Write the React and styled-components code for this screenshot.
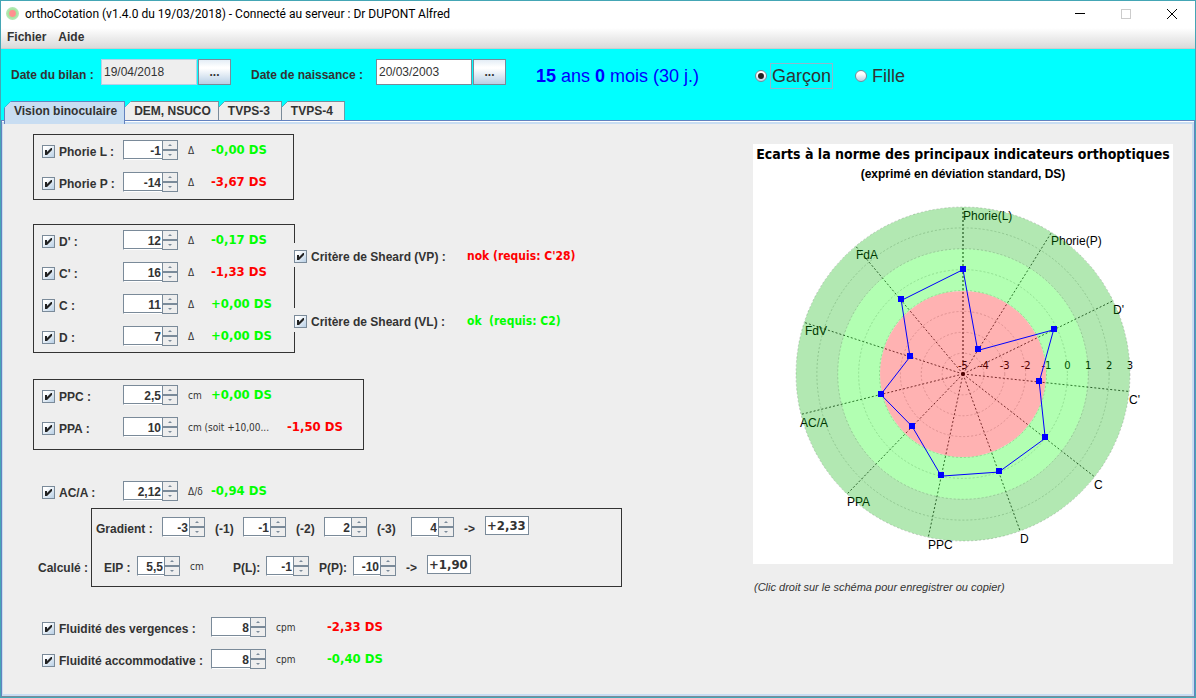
import React from "react";
import styled, { createGlobalStyle, css } from "styled-components";

const c = {
  text: "#333333",
  panel: "#eeeeee",
  steel: "#7a8a99",
  tabBlue: "#6382bf",
  paleBlue: "#c8ddf2",
  cyan: "#00ffff",
  ok: "#00ff00",
  bad: "#ff0000",
};
const arial = `"Liberation Sans", Arial, sans-serif`;
const tahoma = `"DejaVu Sans Condensed", "DejaVu Sans", Tahoma, sans-serif`;

const GlobalStyle = createGlobalStyle`
  *, *::before, *::after { box-sizing: border-box; }
  body { margin: 0; background: ${c.panel}; }
  button, input { font: inherit; color: inherit; margin: 0; padding: 0; }
`;

const Window = styled.div`
  display: flex;
  flex-direction: column;
  min-height: 100vh;
  border: 1px solid #44a6b5;
  background: ${c.panel};
  color: ${c.text};
  font: bold 12px/16px ${arial};
`;

const TitleBar = styled.header`
  display: flex;
  align-items: center;
  height: 25px;
  padding-left: 5px;
  background: #fff;
  color: #000;
`;
const Title = styled.h1`
  flex: 1;
  margin: 0 0 0 6px;
  font: 12px/16px Roboto, "Open Sans", sans-serif;
  white-space: nowrap;
`;
const WindowButton = styled.button`
  display: grid;
  place-items: center;
  width: 46px;
  height: 25px;
  border: 0;
  background: none;
`;

const MenuBar = styled.nav`
  display: flex;
  align-items: center;
  gap: 12px;
  height: 23px;
  padding-left: 6px;
  background: linear-gradient(#fff, #fff 2px, #dadada);
  border-bottom: 1px solid #cccccc;
`;
const MenuItem = styled.button`
  border: 0;
  background: none;
  font-weight: bold;
`;

const Header = styled.section`
  display: flex;
  flex-direction: column;
  justify-content: space-between;
  height: 71px;
  padding-top: 10px;
  background: ${c.cyan};
`;
const Patient = styled.div`
  display: flex;
  align-items: center;
  height: 26px;
  padding-left: 10px;
`;
const Field = styled.div`
  display: flex;
  align-items: center;
  margin-right: ${(p) => p.$after}px;
`;
const FieldLabel = styled.label`
  width: ${(p) => p.$w}px;
  padding-top: 5px;
  white-space: nowrap;
`;
const DateInput = styled.input`
  width: 96px;
  height: 26px;
  padding: 0 2px;
  border: 1px solid ${(p) => (p.readOnly ? "#b8cfe5" : c.steel)};
  background: ${(p) => (p.readOnly ? c.panel : "#fff")};
  font-weight: normal;
`;
const BrowseButton = styled.button`
  width: 33px;
  height: 26px;
  margin-left: 1px;
  border: 1px solid ${c.steel};
  background: linear-gradient(#e4edf6, #fff 30%, #fff 35%, #b8cfe5);
  font-weight: bold;
`;
const Age = styled.output`
  width: 219px;
  padding-top: 8px;
  color: #0000ff;
  font-weight: normal;
  font-size: 18px;
  line-height: 20px;
  white-space: nowrap;
`;
const RadioLabel = styled.label`
  display: flex;
  align-items: center;
  gap: 3px;
  margin-right: 22px;
  padding-top: 8px;
  font-weight: normal;
  font-size: 18px;
  line-height: 24px;
`;
const RadioText = styled.span`
  padding: 0 1px;
  border: 1px solid ${(p) => (p.$focus ? "#8db8cc" : "transparent")};
`;
const Radio = styled.input`
  appearance: none;
  display: grid;
  place-items: center;
  width: 12px;
  height: 12px;
  border: 1px solid ${c.steel};
  border-radius: 50%;
  background: linear-gradient(#fff 30%, #b8cfe5);
  &:checked::before {
    content: "";
    width: 6px;
    height: 6px;
    border-radius: 50%;
    background: #222;
  }
`;

const Tabs = styled.div`
  display: flex;
  padding-left: 3px;
`;
const Tab = styled.button`
  position: relative;
  min-width: 64px;
  height: ${(p) => (p.$active ? 23 : 19)}px;
  margin: 0 0 ${(p) => (p.$active ? -4 : 0)}px ${(p) => (p.$active ? 0 : -1)}px;
  padding: 0 7px ${(p) => (p.$active ? 4 : 0)}px 9px;
  border: 1px solid ${(p) => (p.$active ? c.tabBlue : c.steel)};
  border-bottom: 0;
  background: ${(p) => {
    const line = p.$active ? c.tabBlue : c.steel;
    const fill = p.$active ? c.paleBlue : c.panel;
    return `linear-gradient(135deg, ${line} 4px, ${fill} 4px)`;
  }};
  clip-path: polygon(7px 0, 100% 0, 100% 100%, 0 100%, 0 7px);
  font-weight: bold;
  text-align: left;
  z-index: ${(p) => (p.$active ? 1 : 0)};
`;

const Content = styled.main`
  flex: 1;
  display: flex;
  justify-content: space-between;
  align-items: flex-start;
  gap: 24px;
  padding: 10px 21px 10px 30px;
  border: 1px solid ${c.tabBlue};
  border-bottom-color: ${c.steel};
  box-shadow: inset 0 1px #fff, inset 0 3px ${c.paleBlue}, inset -2px -2px ${c.paleBlue},
    inset 1px 0 ${c.paleBlue};
`;
const Form = styled.form`
  display: flex;
  flex-direction: column;
  align-items: flex-start;
  padding: 3px 0 0 1px;
`;
const boxed = css`
  border: 1px solid ${c.text};
`;
const Group = styled.fieldset`
  display: flex;
  flex-direction: column;
  gap: 12px;
  min-width: ${(p) => p.$w || 0}px;
  margin: 0;
  padding: 5px 8px ${(p) => p.$bottom || 6}px;
  border: 1px solid transparent;
  ${(p) => p.$boxed && boxed}
`;
const Cluster = styled.div`
  display: flex;
  align-items: flex-start;
  margin-top: ${(p) => p.$top}px;
`;
const Row = styled.div`
  display: flex;
  align-items: center;
  height: 20px;
  white-space: nowrap;
`;
const CheckLabel = styled.label`
  display: flex;
  align-items: center;
  gap: 4px;
  width: ${(p) => (p.$w ? `${p.$w}px` : "auto")};
  padding-top: 3px;
`;
const Checkbox = styled.input`
  appearance: none;
  flex: none;
  width: 13px;
  height: 13px;
  border: 1px solid ${c.steel};
  background: linear-gradient(135deg, #fff 20%, #b8cfe5);
  &:checked::before {
    content: "";
    display: block;
    width: 11px;
    height: 11px;
    background: #222;
    clip-path: polygon(2px 4px, 4px 4px, 4px 6px, 8px 2px, 9px 2px, 9px 4px, 4px 9px, 2px 9px);
  }
`;
const SpinBox = styled.div`
  display: flex;
  flex: none;
  width: ${(p) => (p.$small ? 43 : 55)}px;
  height: 20px;
`;
const SpinInput = styled.input`
  flex: 1;
  min-width: 0;
  height: 20px;
  padding: 2px 1px 0 0;
  border: solid ${c.steel};
  border-width: 1px 0 0 1px;
  border-bottom: 1px solid #fff;
  border-radius: 0;
  background: #fff;
  box-shadow: inset 0 -1px ${c.steel};
  font-weight: bold;
  text-align: right;
  outline: 0;
`;
const SpinButtons = styled.div`
  display: flex;
  flex-direction: column;
  width: 16px;
`;
const SpinButton = styled.button`
  display: grid;
  place-items: center;
  height: 10px;
  border: 1px solid ${c.steel};
  background: ${c.panel};
`;
const Unit = styled.span`
  width: ${(p) => p.$w}px;
  margin-left: 10px;
  padding-top: 2px;
  font: 10px/14px ${tahoma};
`;
const Score = styled.output`
  font: bold 13px/16px ${tahoma};
  color: ${(p) => (p.$bad ? c.bad : c.ok)};
`;

const Sheard = styled.div`
  display: flex;
  flex-direction: column;
  gap: 41px;
  margin-left: -1px;
  padding-top: 19px;
`;
const SheardRow = styled.div`
  display: flex;
  align-items: center;
  height: 24px;
  background: ${c.panel};
  white-space: nowrap;
`;
const SheardResult = styled.output`
  padding-top: 2px;
  font: bold 12px/16px ${tahoma};
  color: ${(p) => (p.$bad ? c.bad : c.ok)};
  white-space: pre;
`;

const CalcCaption = styled.span`
  width: 58px;
  padding: 52px 0 0 5px;
`;
const CalcPanel = styled.div`
  display: flex;
  flex-direction: column;
  gap: 19px;
  width: 531px;
  padding: 8px 4px 10px;
  ${boxed}
`;
const CalcText = styled.label`
  width: ${(p) => p.$w}px;
  margin-left: ${(p) => p.$left || 0}px;
  padding-top: 3px;
`;
const CalcResult = styled.input`
  width: 44px;
  height: 19px;
  margin-bottom: 3px;
  padding: 0 1px;
  border: 1px solid ${c.steel};
  background: #fff;
  font: bold 13px/16px ${tahoma};
`;

const ChartColumn = styled.aside`
  flex: 0 1 420px;
  margin: 13px 0 0;
`;
const ChartSvg = styled.svg`
  display: block;
  width: 100%;
  background: #fff;
  font: 12px ${arial};
`;
const Caption = styled.p`
  margin: 15px 0 0 1px;
  font: italic 11px/16px ${arial};
`;

function Spinner({ id, value, label, small }) {
  return (
    <SpinBox $small={small}>
      <SpinInput id={id} aria-label={label} defaultValue={value} />
      <SpinButtons>
        <SpinButton type="button" aria-label="Augmenter">
          <svg width="4" height="3"><path d="M2 0 4 2H0Z" fill={c.steel} /></svg>
        </SpinButton>
        <SpinButton type="button" aria-label="Diminuer">
          <svg width="4" height="3"><path d="M0 0H4L2 2Z" fill={c.steel} /></svg>
        </SpinButton>
      </SpinButtons>
    </SpinBox>
  );
}

function Measure({ label, value, unit, score, bad, labelW = 81, unitW = 23 }) {
  return (
    <Row>
      <CheckLabel $w={labelW}>
        <Checkbox type="checkbox" defaultChecked />
        {label}
      </CheckLabel>
      <Spinner value={value} label={label} />
      <Unit $w={unitW}>{unit}</Unit>
      <Score $bad={bad}>{score}</Score>
    </Row>
  );
}

const CX = 210;
const CY = 230;
const R = 167;
const axes = [
  { name: "Phorie(L)", v: 0, x: 210, y: 76 },
  { name: "Phorie(P)", v: -3.67, x: 298, y: 101 },
  { name: "D'", v: -0.17, x: 360, y: 170 },
  { name: "C'", v: -1.33, x: 376, y: 260 },
  { name: "C", v: 0, x: 341, y: 345 },
  { name: "D", v: 0, x: 267, y: 399 },
  { name: "PPC", v: 0, x: 175, y: 405 },
  { name: "PPA", v: -1.5, x: 94, y: 362 },
  { name: "AC/A", v: -0.94, x: 47, y: 283 },
  { name: "FdV", v: -2.33, x: 52, y: 191 },
  { name: "FdA", v: -0.4, x: 103, y: 115 },
];
const polar = (i, r) => {
  const a = (i * 32 * Math.PI) / 180;
  return [CX + r * Math.sin(a), CY - r * Math.cos(a)];
};

function RadarChart() {
  const points = axes.map((a, i) => polar(i, ((a.v + 5) * R) / 8));
  return (
    <ChartSvg viewBox="0 0 420 420" role="img" aria-label="Ecarts à la norme">
      <text x="210" y="15" textAnchor="middle" fontFamily="DejaVu Sans Condensed" fontWeight="bold" fontSize="14">
        Ecarts à la norme des principaux indicateurs orthoptiques
      </text>
      <text x="210" y="34" textAnchor="middle" fontWeight="bold">
        (exprimé en déviation standard, DS)
      </text>
      {[1, 2, 3, 4, 5, 6, 7, 8].map((n) => (
        <circle key={n} cx={CX} cy={CY} r={(n * R) / 8} fill="none" stroke="#d0d0d0" strokeDasharray="2 2" />
      ))}
      {axes.map((a, i) => {
        const [x, y] = polar(i, R);
        return (
          <line key={a.name} x1={CX} y1={CY} x2={x} y2={y} strokeDasharray="2 2"
            stroke={i ? "#404040" : "#808080"} strokeWidth={i ? 1 : 2} />
        );
      })}
      <circle cx={CX} cy={CY} r="2" />
      {[-5, -4, -3, -2, -1, 0, 1, 2, 3].map((n, i) => (
        <text key={n} x={CX + (i * R) / 8} y="225" textAnchor="middle" fontFamily="DejaVu Sans" fontSize="10">{n}</text>
      ))}
      {axes.map((a) => (
        <text key={a.name} x={a.x} y={a.y}>{a.name}</text>
      ))}
      <circle cx={CX} cy={CY} r="146" fill="none" stroke="#00b200" strokeWidth="42" opacity="0.3" />
      <circle cx={CX} cy={CY} r="104" fill="none" stroke="#00ff00" strokeWidth="42" opacity="0.3" />
      <circle cx={CX} cy={CY} r="83" fill="#ff0000" opacity="0.3" />
      <polygon points={points.map((p) => p.join(",")).join(" ")} fill="none" stroke="#0000ff" />
      {points.map(([x, y], i) => (
        <rect key={i} x={Math.round(x) - 3} y={Math.round(y) - 4} width="6" height="6" fill="#0000ff" />
      ))}
    </ChartSvg>
  );
}

export default function App() {
  return (
    <>
      <GlobalStyle />
      <Window>
        <TitleBar>
          <svg width="13" height="13" viewBox="0 0 13 13">
            <circle cx="6.5" cy="6.5" r="6.5" fill="#b2e8b2" />
            <circle cx="6.5" cy="6.5" r="5" fill="#a6e6a0" />
            <circle cx="6.5" cy="6.5" r="3.4" fill="#ff8f8f" />
          </svg>
          <Title>orthoCotation (v1.4.0 du 19/03/2018) - Connecté au serveur : Dr DUPONT Alfred</Title>
          <WindowButton type="button" aria-label="Réduire">
            <svg width="10" height="10"><path d="M0 4.5H10" stroke="#000" /></svg>
          </WindowButton>
          <WindowButton type="button" aria-label="Agrandir" disabled>
            <svg width="10" height="10"><rect x=".5" y=".5" width="9" height="9" fill="none" stroke="#ccc" /></svg>
          </WindowButton>
          <WindowButton type="button" aria-label="Fermer">
            <svg width="10" height="10"><path d="M0 0 10 10M10 0 0 10" stroke="#000" /></svg>
          </WindowButton>
        </TitleBar>
        <MenuBar>
          <MenuItem type="button">Fichier</MenuItem>
          <MenuItem type="button">Aide</MenuItem>
        </MenuBar>

        <Header>
          <Patient>
            <Field $after={20}>
              <FieldLabel htmlFor="bilan" $w={90}>Date du bilan :</FieldLabel>
              <DateInput id="bilan" defaultValue="19/04/2018" readOnly />
              <BrowseButton type="button">...</BrowseButton>
            </Field>
            <Field $after={30}>
              <FieldLabel htmlFor="naissance" $w={125}>Date de naissance :</FieldLabel>
              <DateInput id="naissance" defaultValue="20/03/2003" />
              <BrowseButton type="button">...</BrowseButton>
            </Field>
            <Age><b>15</b> ans <b>0</b> mois (30 j.)</Age>
            <RadioLabel>
              <Radio type="radio" name="sexe" defaultChecked />
              <RadioText $focus>Garçon</RadioText>
            </RadioLabel>
            <RadioLabel>
              <Radio type="radio" name="sexe" />
              <RadioText>Fille</RadioText>
            </RadioLabel>
          </Patient>
          <Tabs role="tablist">
            <Tab type="button" role="tab" aria-selected="true" $active>Vision binoculaire</Tab>
            <Tab type="button" role="tab">DEM, NSUCO</Tab>
            <Tab type="button" role="tab">TVPS-3</Tab>
            <Tab type="button" role="tab">TVPS-4</Tab>
          </Tabs>
        </Header>

        <Content>
          <Form>
            <Group $boxed $w={261} $bottom={7}>
              <Measure label="Phorie L :" value="-1" unit="Δ" score="-0,00 DS" />
              <Measure label="Phorie P :" value="-14" unit="Δ" score="-3,67 DS" bad />
            </Group>

            <Cluster $top={24}>
              <Group $boxed $w={262}>
                <Measure label="D' :" value="12" unit="Δ" score="-0,17 DS" />
                <Measure label="C' :" value="16" unit="Δ" score="-1,33 DS" bad />
                <Measure label="C :" value="11" unit="Δ" score="+0,00 DS" />
                <Measure label="D :" value="7" unit="Δ" score="+0,00 DS" />
              </Group>
              <Sheard>
                <SheardRow>
                  <CheckLabel $w={173}>
                    <Checkbox type="checkbox" defaultChecked />
                    Critère de Sheard (VP) :
                  </CheckLabel>
                  <SheardResult $bad>nok (requis: C'28)</SheardResult>
                </SheardRow>
                <SheardRow>
                  <CheckLabel $w={173}>
                    <Checkbox type="checkbox" defaultChecked />
                    Critère de Sheard (VL) :
                  </CheckLabel>
                  <SheardResult>{"ok  (requis: C2)"}</SheardResult>
                </SheardRow>
              </Sheard>
            </Cluster>

            <Cluster $top={26}>
              <Group $boxed $w={331} $bottom={12}>
                <Measure label="PPC :" value="2,5" unit="cm" score="+0,00 DS" />
                <Measure label="PPA :" value="10" unit="cm (soit +10,00..." unitW={99} score="-1,50 DS" bad />
              </Group>
            </Cluster>

            <Cluster $top={25}>
              <Group>
                <Measure label="AC/A :" value="2,12" unit="Δ/δ" score="-0,94 DS" />
              </Group>
            </Cluster>

            <Cluster $top={0}>
              <CalcCaption>Calculé :</CalcCaption>
              <CalcPanel>
                <Row>
                  <CalcText htmlFor="g0" $w={66}>Gradient :</CalcText>
                  <Spinner small id="g0" value="-3" />
                  <CalcText htmlFor="g1" $w={28} $left={10}>(-1)</CalcText>
                  <Spinner small id="g1" value="-1" />
                  <CalcText htmlFor="g2" $w={28} $left={10}>(-2)</CalcText>
                  <Spinner small id="g2" value="2" />
                  <CalcText htmlFor="g3" $w={34} $left={10}>(-3)</CalcText>
                  <Spinner small id="g3" value="4" />
                  <CalcText htmlFor="gr" $w={21} $left={10}>-&gt;</CalcText>
                  <CalcResult id="gr" defaultValue="+2,33" readOnly />
                </Row>
                <Row>
                  <CalcText htmlFor="eip" $w={33} $left={8}>EIP :</CalcText>
                  <Spinner small id="eip" value="5,5" />
                  <Unit $w={33}>cm</Unit>
                  <CalcText htmlFor="pl" $w={33} $left={10}>P(L):</CalcText>
                  <Spinner small id="pl" value="-1" />
                  <CalcText htmlFor="pp" $w={34} $left={10}>P(P):</CalcText>
                  <Spinner small id="pp" value="-10" />
                  <CalcText htmlFor="pr" $w={21} $left={10}>-&gt;</CalcText>
                  <CalcResult id="pr" defaultValue="+1,90" readOnly />
                </Row>
              </CalcPanel>
            </Cluster>

            <Cluster $top={24}>
              <Group>
                <Measure label="Fluidité des vergences :" labelW={169} value="8" unit="cpm" unitW={51} score="-2,33 DS" bad />
                <Measure label="Fluidité accommodative :" labelW={169} value="8" unit="cpm" unitW={51} score="-0,40 DS" />
              </Group>
            </Cluster>
          </Form>

          <ChartColumn>
            <RadarChart />
            <Caption>(Clic droit sur le schéma pour enregistrer ou copier)</Caption>
          </ChartColumn>
        </Content>
      </Window>
    </>
  );
}
